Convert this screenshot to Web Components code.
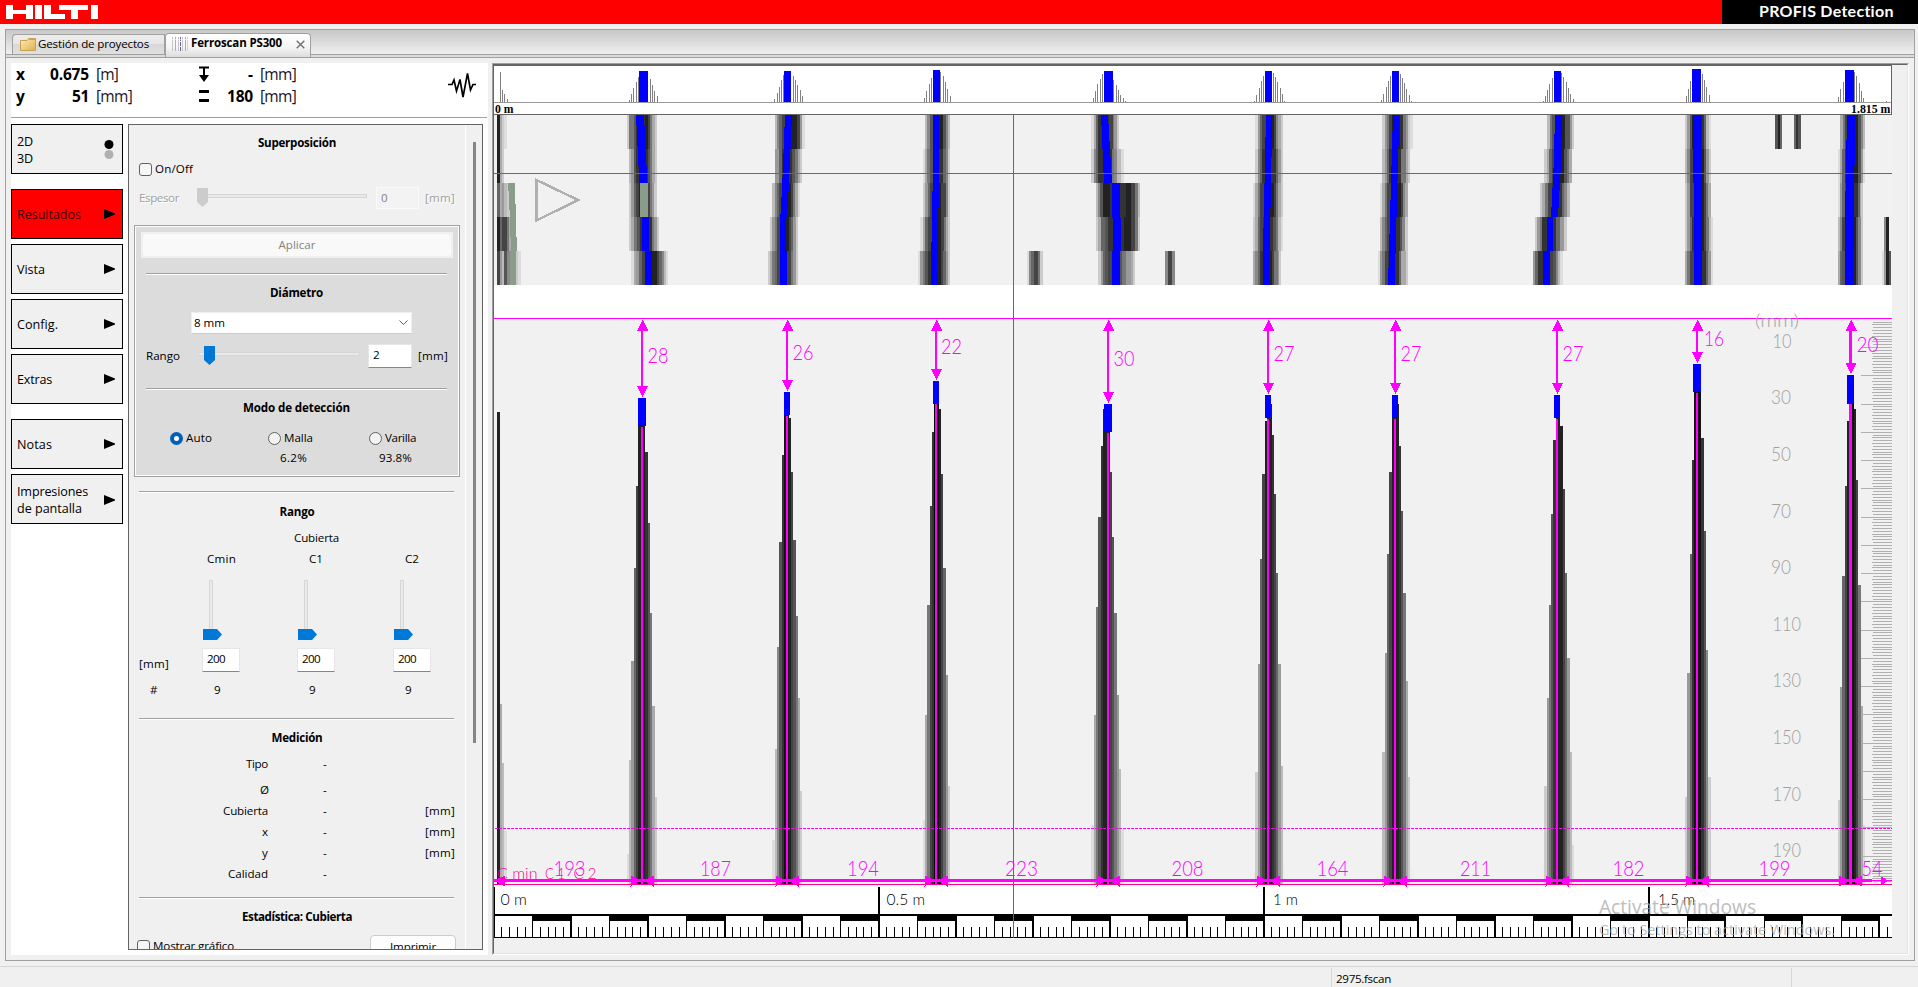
<!DOCTYPE html>
<html lang="es">
<head>
<meta charset="utf-8">
<title>PROFIS Detection</title>
<style>
html,body{margin:0;height:100%;background:#f0f0f0;overflow:hidden}
body{font:11.6px/16px "Open Sans","Noto Sans",sans-serif;color:#000}
</style>
</head>
<body>
<profis-app></profis-app>
<script>
const define=(name,html,setup)=>customElements.define(name,class extends HTMLElement{
  constructor(){super();this.attachShadow({mode:'open'});}
  connectedCallback(){
    if(this.ready)return;this.ready=true;
    this.shadowRoot.innerHTML=typeof html==='function'?html(this):html;
    if(setup)setup(this);
  }
});

/* Label whose letter spacing is tuned so the text spans exactly w pixels */
define('fit-text','<style>:host{display:block;white-space:nowrap;flex:none}:host([b]){font-weight:700}span{display:inline-block}</style><span><slot></slot></span>',el=>{
  const w=+el.getAttribute('w'),s=el.shadowRoot.querySelector('span');
  if(el.hasAttribute('s'))el.style.fontSize=el.getAttribute('s')+'px';
  if(el.hasAttribute('m'))el.style.marginLeft=el.getAttribute('m')+'px';
  const n=el.textContent.length;
  s.style.letterSpacing=((w-s.getBoundingClientRect().width)/Math.max(1,n))+'px';
  el.style.width=w+'px';
});

define('hilti-logo',`<style>:host{display:block;width:93px;height:14px}svg{display:block}</style>
<svg width="93" height="14" fill="#fff" role="img" aria-label="HILTI" shape-rendering="crispEdges">
<rect x="0" y="0" width="7" height="14"/><rect x="7" y="5" width="13" height="4"/><rect x="20" y="0" width="7" height="14"/>
<rect x="29" y="0" width="7" height="14"/><rect x="38" y="0" width="7" height="14"/><rect x="45" y="9" width="14" height="5"/>
<rect x="53" y="0" width="29" height="5"/><rect x="65" y="5" width="7" height="9"/><rect x="85" y="0" width="7" height="14"/></svg>`);

define('app-banner',`<style>:host{display:flex;height:24px;background:#f00;justify-content:space-between}
hilti-logo{margin:5px 0 0 6px}.p{box-sizing:border-box;width:196px;background:#000;color:#fff;padding:0 0 0 37px;font:700 16px/21px Lato,sans-serif}</style>
<hilti-logo></hilti-logo><div class="p"><fit-text w="135">PROFIS Detection</fit-text></div>`);

define('tab-strip',`<style>:host{display:flex;box-sizing:border-box;height:28px;padding:4px 0 0 6px;align-items:flex-start;
background:linear-gradient(#c8c8c8,#efefef 24px,#a0a0a0 24px,#a0a0a0 25px,#dcdcdc 25px,#dcdcdc 27px,#a0a0a0 27px)}
.t{display:flex;box-sizing:border-box;border:1px solid #a0a0a0;border-bottom:0;align-items:center}
.a{width:153px;height:20px;border-radius:4px 0 0 0;background:linear-gradient(#ececec,#e6e6e6 50%,#d8d8d8 50%,#e0e0e0);padding-left:7px}
.b{width:146px;height:24px;margin-top:-1px;margin-left:0;border-radius:4px 4px 0 0;background:linear-gradient(#fff,#f4f4f4 60%,#dcdcdc);padding:0 0 3px 5px}
.a fit-text,.b fit-text{position:relative;top:-1px}
svg{display:block;flex:none}</style>
<div class="t a"><svg width="16" height="13"><defs><linearGradient id="g" x2="1" y2="1"><stop offset="0" stop-color="#fdeeb5"/><stop offset="1" stop-color="#dfae52"/></linearGradient></defs><path d="M.5 2.5H7L8.500 .5H15.500V12.500H.5Z" fill="url(#g)" stroke="#c9a050"/><path d="M9 1.500H15" stroke="#74b6e8"/></svg><fit-text w="111" m="2">Gestión de proyectos</fit-text></div>
<div class="t b"><svg width="17" height="16"><g fill="none"><path d="M1.500 1V15M7.500 1V15M11.500 1V15" stroke="#c9c3d0"/><path d="M4.500 1V15M14.500 1V15" stroke="#b3a9be"/><path d="M9.500 1V15" stroke="#6f6480" stroke-dasharray="4 1"/><path d="M16.500 1V15" stroke="#d8d0e8"/><path d="M0 3.500H17" stroke="#fff" opacity=".6"/></g></svg><fit-text b w="91" m="3" s="11.500">Ferroscan PS300</fit-text><svg width="9" height="9" style="margin-left:14px"><path d="M.7 .7 8.300 8.300M8.300 .7.7 8.300" stroke="#707070" stroke-width="1.400"/></svg></div>`);

define('cursor-readout',`<style>:host{display:flex;box-sizing:border-box;height:55px;width:476px;border-bottom:1px solid #a0a0a0;font-size:15.500px;line-height:22px;background:#fff}
.g{display:grid;grid-template-columns:73px 7px 103px 29px 25px 7px 44px;grid-template-rows:22px 22px;padding-left:5px;align-items:center}
.r{justify-self:end}i{font-style:normal;color:#14142c}svg{display:block;flex:none}.h{display:grid;grid-template-columns:auto auto;justify-content:space-between}</style>
<div class="g">
<div class="h"><fit-text b w="9">x</fit-text><fit-text b w="39">0.675</fit-text></div><s></s><i><fit-text w="22">[m]</fit-text></i><svg width="10" height="17"><path d="M0 1.500H10M5 2V10" stroke="#000" stroke-width="2"/><path d="M0 9H10L5 16Z"/></svg><fit-text b class="r" w="5">-</fit-text><s></s><i><fit-text w="36">[mm]</fit-text></i>
<div class="h"><fit-text b w="9">y</fit-text><fit-text b w="17">51</fit-text></div><s></s><i><fit-text w="36">[mm]</fit-text></i><svg width="10" height="13"><path d="M0 1.500H10M0 10.500H10" stroke="#000" stroke-width="3"/></svg><fit-text b class="r" w="26">180</fit-text><s></s><i><fit-text w="36">[mm]</fit-text></i></div>
<svg width="30" height="32" viewBox="447 69 30 32" style="margin:6px 0 0 143px"><path d="M448 84.500H452L454 80 456.500 91 460 79.500 463 97 467.500 73.500 470.500 90 473 84.500H476" fill="none" stroke="#000" stroke-width="1.700"/></svg>`);

define('nav-button',el=>`<style>:host{display:flex;box-sizing:border-box;width:112px;height:50px;border:1px solid #000;background:#f0f0f0;align-items:center;justify-content:space-between;padding:0 7px 0 5px;margin-bottom:5px;font-size:12.600px;line-height:17px}
:host([on]){background:#f00;color:#400000}:host([gap]){margin-bottom:15px}:host([two]){padding-top:1px}:host([dots]){padding-right:8px}svg{display:block}</style><div><slot></slot></div>
${el.hasAttribute('dots')?'<svg width="10" height="20"><circle cx="5" cy="4.500" r="4.500"/><circle cx="5" cy="14.500" r="4.500" fill="#b0b0b0"/></svg>':'<svg width="11" height="10"><path d="M0 0 11 4.500V5.500L0 10Z"/></svg>'}`);

define('nav-menu',`<style>:host{display:flex;flex-direction:column;width:112px}</style>
<nav-button dots gap two><fit-text w="16">2D</fit-text><fit-text w="16">3D</fit-text></nav-button>
<nav-button on><fit-text w="64">Resultados</fit-text></nav-button>
<nav-button><fit-text w="28">Vista</fit-text></nav-button>
<nav-button><fit-text w="41">Config.</fit-text></nav-button>
<nav-button gap><fit-text w="35">Extras</fit-text></nav-button>
<nav-button><fit-text w="35">Notas</fit-text></nav-button>
<nav-button two><fit-text w="71">Impresiones</fit-text><fit-text w="65">de pantalla</fit-text></nav-button>`);

define('ui-row',el=>`<style>:host{display:flex;align-items:center;flex:none;box-sizing:border-box;height:${el.getAttribute('h')}px;padding-left:${el.getAttribute('l')||0}px}:host([c]){justify-content:center}:host([top]){align-items:flex-start}</style><slot></slot>`);
define('ui-rule','<style>:host{display:block;flex:none;height:1px;background:#a0a0a0;border-bottom:1px solid #fff;margin:0 11px 0 10px}</style>');
define('ui-check','<style>:host{display:block;flex:none;box-sizing:border-box;width:13px;height:13px;border:1px solid #626262;border-radius:3px;background:#f6f6f6}</style>');
define('ui-radio','<style>:host{display:block;flex:none;box-sizing:border-box;width:13px;height:13px;border:1px solid #626262;border-radius:50%;background:#f3f3f3}:host([on]){border:4px solid #005fb8;background:#fff}</style>');
define('ui-field',el=>`<style>:host{display:block;flex:none;box-sizing:border-box;width:${el.getAttribute('w')}px;height:${el.getAttribute('h')}px;background:#fff;border:1px solid #e6e6e6;border-bottom-color:#868686;padding:2px 0 0 4px}:host([off]){background:#f3f3f3;border-color:#fafafa;color:#838383}</style><slot></slot>`);
define('h-slider',el=>`<style>:host{display:block;flex:none}svg{display:block}</style><svg width="${el.getAttribute('w')}" height="20"><rect x=".5" y="6.500" width="${el.getAttribute('w')-1}" height="3" fill="#e7eaea" stroke="#d6d6d6"/><path d="M${el.getAttribute('p')} 0h11v14l-5.500 5-5.500-5z" fill="${el.hasAttribute('off')?'#ccc':'#0078d7'}"/></svg>`);
define('v-slider',`<style>:host{display:block;flex:none}svg{display:block}</style><svg width="20" height="60"><rect x="6.500" y=".5" width="3" height="52" fill="#e7eaea" stroke="#d6d6d6"/><path d="M0 49h14l5 5.500-5 5.500H0z" fill="#0078d7"/></svg>`);
define('measure-row',el=>{const u=el.hasAttribute('unit');return `<style>:host{display:grid;flex:none;grid-template-columns:139px 55px 102px 1fr;height:21px;align-items:center}fit-text{justify-self:start}.k{justify-self:end}</style><fit-text class="k" w="${el.getAttribute('w')}">${el.getAttribute('k')}</fit-text><s></s><fit-text w="4">-</fit-text>${u?'<fit-text w="30">[mm]</fit-text>':''}`});

define('settings-panel',`<style>:host{display:flex;box-sizing:border-box;width:355px;height:826px;border:1px solid #646464;background:#f0f0f0;overflow:hidden}
.c{width:336px;display:flex;flex-direction:column;flex:none;border-right:1px solid #fff}.sb{width:3px;height:601px;background:#858585;margin:17px 0 0 7px}
.box{flex:none;box-sizing:border-box;width:326px;height:252px;margin-left:5px;border:1px solid #a0a0a0;box-shadow:inset 0 0 0 1px #fff;background:#dcdcdc;display:flex;flex-direction:column;padding:6px 0 0 6px}
.box ui-rule{margin:0 12px 0 5px}
.ap{width:312px;height:26px;flex:none;box-sizing:border-box;background:#f0f0f0;padding:2px}.ap div{height:22px;border-radius:4px;background:#f9f9f9;display:flex;align-items:center;justify-content:center;color:#838383}
.cb{width:221px;height:22px;flex:none;box-sizing:border-box;background:#fff;border:1px solid #eee;border-bottom-color:#ccc;display:flex;align-items:center;justify-content:space-between;padding:0 3px 0 2px}
.off{color:#a0a0a0;text-shadow:1px 1px #fff}.bt{box-sizing:border-box;width:86px;height:27px;border:1px solid #ccc;border-radius:4px;background:#fdfdfd;display:flex;justify-content:center;padding-top:3px}</style>
<div class="c">
<ui-row h="36" c><fit-text b w="78">Superposición</fit-text></ui-row>
<ui-row h="16" l="10"><ui-check style="position:relative;top:0"></ui-check><fit-text w="38" m="3" style="margin-top:-1px">On/Off</fit-text></ui-row>
<ui-row h="10"></ui-row>
<ui-row h="22" l="10" class="off"><fit-text w="40">Espesor</fit-text><h-slider off w="170" p="0" style="margin-left:18px"></h-slider><ui-field off w="43" h="22" style="margin-left:9px;text-shadow:none"><fit-text w="7">0</fit-text></ui-field><fit-text w="30" m="6">[mm]</fit-text></ui-row>
<ui-row h="16"></ui-row>
<div class="box">
<div class="ap"><div><fit-text w="37">Aplicar</fit-text></div></div>
<ui-row h="15"></ui-row><ui-rule></ui-rule>
<ui-row h="36" l="129"><fit-text b w="53">Diámetro</fit-text></ui-row>
<ui-row h="24" l="50"><div class="cb"><fit-text w="31">8 mm</fit-text><svg width="9" height="6"><path d="M.5.5 4.500 4.500 8.500.5" fill="none" stroke="#606060"/></svg></div></ui-row>
<ui-row h="42" l="5"><fit-text w="34">Rango</fit-text><h-slider w="162" p="6" style="margin-left:18px"></h-slider><ui-field w="44" h="24" style="margin-left:8px"><fit-text w="7">2</fit-text></ui-field><fit-text w="30" m="6">[mm]</fit-text></ui-row>
<ui-row h="11"></ui-row><ui-rule></ui-rule>
<ui-row h="36" l="102"><fit-text b w="107">Modo de detección</fit-text></ui-row>
<ui-row h="24" l="29"><ui-radio on></ui-radio><fit-text w="26" m="3">Auto</fit-text><ui-radio style="margin-left:56px"></ui-radio><fit-text w="29" m="3">Malla</fit-text><ui-radio style="margin-left:56px"></ui-radio><fit-text w="31" m="3">Varilla</fit-text></ui-row>
<ui-row h="16" l="139"><fit-text w="27">6.2%</fit-text><fit-text w="33" m="72">93.8%</fit-text></ui-row>
</div>
<ui-row h="14"></ui-row><ui-rule></ui-rule>
<ui-row h="38" c><fit-text b w="35">Rango</fit-text></ui-row>
<ui-row h="14" l="165"><fit-text w="45">Cubierta</fit-text></ui-row>
<ui-row h="28" l="78"><fit-text w="29">Cmin</fit-text><fit-text w="14" m="73">C1</fit-text><fit-text w="14" m="82">C2</fit-text></ui-row>
<ui-row h="7"></ui-row>
<ui-row h="60" l="74"><v-slider></v-slider><v-slider style="margin-left:75px"></v-slider><v-slider style="margin-left:76px"></v-slider></ui-row>
<ui-row h="8"></ui-row>
<ui-row h="24" l="10" top><fit-text w="30" style="margin-top:8px">[mm]</fit-text><ui-field w="38" h="24" style="margin-left:33px"><fit-text w="18">200</fit-text></ui-field><ui-field w="38" h="24" style="margin-left:57px"><fit-text w="18">200</fit-text></ui-field><ui-field w="38" h="24" style="margin-left:58px"><fit-text w="18">200</fit-text></ui-field></ui-row>
<ui-row h="35" l="21"><fit-text w="7">#</fit-text><fit-text w="6" m="57">9</fit-text><fit-text w="6" m="89">9</fit-text><fit-text w="6" m="90">9</fit-text></ui-row>
<ui-row h="11"></ui-row><ui-rule></ui-rule>
<ui-row h="36" c><fit-text b w="51">Medición</fit-text></ui-row>
<measure-row k="Tipo" w="22" style="height:16px"></measure-row><ui-row h="7"></ui-row>
<measure-row k="Ø" w="8"></measure-row><measure-row k="Cubierta" w="45" unit></measure-row><measure-row k="x" w="6" unit></measure-row><measure-row k="y" w="6" unit></measure-row><measure-row k="Calidad" w="40"></measure-row>
<ui-row h="13"></ui-row><ui-rule></ui-rule>
<ui-row h="36" c><fit-text b w="110">Estadística: Cubierta</fit-text></ui-row>
<ui-row h="26" l="8" top><ui-check style="margin-top:5px"></ui-check><fit-text w="81" m="3" style="margin-top:3px">Mostrar gráfico</fit-text><div class="bt" style="margin-left:136px"><fit-text w="46">Imprimir</fit-text></div></ui-row>
</div><div class="sb"></div>`);

/* ---------- scan drawing: regions keep their own origin, lengths in thirds of a pixel ---------- */
const TOP=[[490,'30 50,36 104,42 117,51 132,418 135,424 116,430 99,439 81,445 66,481 72,487 90,493 107,502 123,853 132,862 114,868 96,874 75,880 60,910 63,916 74,922 90,931 105,937 123,1303 129,1309 108,1318 87,1324 69,1351 51,1360 63,1366 81,1372 102,1381 123','447 474 48,882 903 48,1329 1350 45'],
[960,'400 129,406 108,412 87,421 72,427 57,460 75,469 90,475 105,481 120,490 129,496 138,883 138,889 120,898 99,904 78,910 63,940 54,946 66,952 81,961 99,967 117,973 138,1264 135,1270 117,1279 96,1285 78,1291 63,1321 57,1327 69,1333 84,1339 102,1348 120,1354 138','432 459 48,915 936 48,1296 1317 48'],
[1430,'340 138,346 123,352 105,358 87,367 69,394 54,400 66,409 81,415 99,421 117,430 132,769 123,775 102,781 78,817 57,823 75,829 96,838 120,1225 126,1231 102,1240 81,1273 51,1279 63,1288 84,1294 108,1300 129,1369 138','372 393 48,786 813 42,1245 1272 45']];
/* per region: [slice row, "edge shade edge shade … edge"] */
const BANDS=[[490,[
[0,'21 2 30 a 36 c 42 d 51'],[1,'21 2 30 a 36 c 42'],[2,'21 6 30 a 36 9 42 b 50 c 60'],[3,'21 2 30 6 36 4 51 7 57 a 63'],[4,'21 4 30 9 36 b 42 5 51 8 60 c 84 d 93'],
[0,'411 c 417 7 432 5 438 3 465 2 474 4 480 7 486 a 495 c 501'],[1,'417 b 423 9 432 5 438 3 468 3 474 5 480 7 486 a 495 c 501'],[2,'417 c 423 9 432 6 438 4 447 2 474 4 480 7 486 9 492 c 501'],[3,'417 c 423 a 432 7 441 5 450 3 486 7 492 9 501 c 507'],[4,'423 d 432 a 438 9 447 6 456 4 486 2 501 4 507 6 516 8 522 b 528 d 534'],
[0,'855 b 861 8 867 6 876 4 885 2 921 4 930 9 936 d 945'],[1,'855 9 867 6 876 3 903 3 906 5 915 7 924 a 930 c 936'],[2,'846 b 855 8 861 6 867 4 876 2 903 4 909 7 915 a 924 d 930'],[3,'840 c 846 9 855 7 861 4 870 2 897 4 903 6 909 9 918 c 924'],[4,'834 c 840 a 846 7 855 6 861 4 903 7 909 9 918 c 924'],
[0,'1305 b 1311 8 1320 5 1329 2 1359 5 1368 8 1374 b 1380'],[1,'1299 d 1305 a 1311 7 1320 5 1329 3 1359 6 1368 8 1374 c 1380'],[2,'1299 c 1305 9 1314 6 1320 4 1329 2 1353 4 1368 8 1374 c 1380'],[3,'1290 d 1299 a 1305 6 1314 4 1326 2 1353 4 1362 7 1368 a 1374 c 1380'],[4,'1284 d 1290 9 1299 7 1305 5 1314 3 1323 2 1353 4 1359 6 1368 9 1374 c 1380']]],
[960,[[4,'201 d 207 8 213 6 222 4 234 7 240 c 249'],[4,'615 8 624 4 636 8 645'],
[0,'393 d 402 a 408 6 414 3 447 4 459 7 462 9 471 c 477'],[1,'393 c 402 8 408 6 414 3 456 7 462 8 471 b 483 d 492'],[2,'408 b 414 8 420 5 429 2 450 3 498 2 513 4 525 7 534 b 540'],[3,'408 c 414 a 423 6 435 5 444 3 492 2 513 4 525 7 534 c 540'],[4,'414 c 423 9 429 6 435 5 444 4 480 5 486 7 498 9 513 a 519 c 525'],
[0,'885 d 894 9 900 6 906 4 918 2 942 4 948 8 954 a 963 c 969'],[1,'885 c 894 8 900 6 906 3 948 6 954 9 963 c 969'],[2,'879 d 885 a 894 7 900 4 912 2 942 4 948 7 954 a 963 c 969'],[3,'879 c 885 a 894 6 900 4 910 3 939 5 948 7 954 b 963 d 969'],[4,'879 a 885 8 894 6 900 3 909 2 936 4 942 7 954 9 957 c 963'],
[0,'1266 c 1275 9 1281 7 1287 4 1296 2 1320 3 1329 7 1338 9 1344 c 1350 d 1359'],[1,'1266 b 1275 9 1281 6 1287 3 1323 7 1338 a 1344 c 1350'],[2,'1260 d 1266 a 1275 7 1281 4 1293 2 1323 4 1329 8 1335 a 1344'],[3,'1260 b 1266 8 1275 6 1281 4 1290 3 1320 5 1326 8 1335 c 1344'],[4,'1254 d 1260 9 1266 7 1275 4 1284 3 1317 6 1323 a 1338 c 1344']]],
[1430,[[0,'351 b 360 7 366 5 375 2 405 5 420 9 426 c 432'],[1,'342 c 351 a 357 6 366 4 372 2 402 5 411 7 417 a 426'],[2,'330 c 336 a 345 7 354 4 366 3 396 6 402 8 411 b 420'],[3,'315 c 321 9 330 7 336 3 378 6 390 9 402 c 411'],[4,'309 9 315 6 324 3 360 4 369 5 378 8 384 b 390 d 399'],
[0,'765 c 771 9 780 5 786 2 816 3 822 6 828 b 837 d 843'],[1,'765 b 771 8 780 4 789 2 822 5 828 9 837 c 843'],[2,'765 c 771 9 780 4 792 2 822 4 828 7 834 a 843'],[3,'765 c 771 9 780 6 786 3 792 2 822 4 828 7 837 b 843 d 849'],[4,'765 a 771 7 780 4 792 3 828 6 834 9 843 d 849'],
[0,'1035 5 1043 2 1050 6 1056'],[0,'1092 6 1098 3 1104 5 1113'],
[0,'1230 a 1239 7 1245 4 1251 2 1284 5 1293 8 1299 b 1305'],[1,'1224 d 1230 a 1236 6 1245 3 1251 2 1284 5 1293 9 1299 d 1305'],[2,'1224 d 1230 9 1236 6 1245 4 1272 3 1284 6 1290 a 1293 c 1299'],[3,'1224 b 1230 8 1236 4 1245 2 1278 5 1284 8 1293 c 1299'],[4,'1224 a 1230 6 1236 5 1245 2 1278 5 1284 8 1293 c 1299'],
[3,'1362 8 1368 2 1377'],[4,'1356 d 1362 9 1368 2 1377 5 1383']]]];
/* bar axes in the plan view: left right y … */
const AXES=[[490,['438 462 180,448 472 384','456 478 486,456 478 588','465 486 588,465 486 690','885 906 180,877 897 384,871 891 486','870 888 486,870 888 588','870 891 588,870 891 690','1329 1348 180,1328 1347 384,1326 1345 486,1324 1343 588,1323 1341 690']],
[960,['423 444 180,432 456 384','456 480 384,459 483 588','456 480 588,456 480 690','918 937 180,909 929 588','909 927 588,909 927 690','1299 1318 180,1284 1304 690']],
[1430,['375 396 180,371 393 330,363 384 486','351 369 486,351 369 588','339 360 588,339 360 690','789 813 180,789 813 366','792 816 366,792 816 690','1251 1276 180,1245 1271 486,1245 1270 690']]];
const GREEN=['54 75 384,57 76 430,60 78 500,63 81 588','60 78 588,60 78 690','450 474 384,450 474 486'];
/* depth profile columns: left right top shade */
const COLS=[[490,'21 30 171 2,30 36 1047 a,36 42 1224 b,42 51 1428 d,411 417 1497 d,417 423 1215 b,423 432 918 9,432 438 639 6,438 444 393 4,444 465 213 2,465 474 291 3,474 480 504 5,480 486 774 7,486 495 1053 a,495 501 1326 c,846 855 1455 d,855 861 1182 b,861 867 876 8,867 876 561 5,876 882 300 3,882 897 180 1,897 903 189 2,903 909 351 4,909 918 555 5,918 924 783 7,924 930 1029 a,930 936 1308 c,1299 1305 1395 d,1305 1311 1080 a,1311 1320 750 7,1320 1326 453 4,1326 1332 231 3,1332 1347 147 0,1347 1353 162 2,1353 1359 357 4,1359 1368 639 6,1368 1374 960 9,1374 1380 1293 c'],
[960,'393 402 1410 d,402 408 1080 a,408 414 756 7,414 423 486 5,423 429 273 3,429 450 162 2,450 456 351 4,456 462 546 5,462 471 774 7,471 477 1020 9,477 483 1242 b,483 492 1422 d,879 885 1548 e,885 894 1251 c,894 900 927 9,900 906 612 6,906 915 357 4,915 921 198 2,921 936 147 2,936 942 240 3,942 948 417 4,948 954 654 6,954 963 927 9,963 969 1233 b,969 975 1521 e,1260 1266 1479 e,1266 1275 1191 b,1275 1281 894 9,1281 1287 597 6,1287 1296 351 4,1296 1317 147 2,1317 1323 273 3,1323 1329 468 5,1329 1338 714 7,1338 1344 978 a,1344 1350 1266 c,1350 1359 1540 e'],
[1430,'336 342 1530 e,342 351 1293 c,351 357 1029 9,357 363 750 7,363 369 477 5,369 378 255 3,378 390 188 2,390 399 213 2,399 405 402 4,405 411 654 6,411 420 909 9,420 426 1191 b,426 432 1470 d,765 771 1326 c,771 780 954 9,780 786 597 6,786 792 315 3,792 813 111 1,813 822 249 3,822 828 528 5,828 834 885 8,834 843 1266 c,1224 1230 1335 c,1230 1236 996 9,1236 1245 663 6,1245 1251 393 4,1251 1257 198 2,1257 1272 147 1,1272 1278 162 2,1278 1284 375 4,1284 1293 690 7,1293 1299 1053 a,1299 1305 1410 d']];
/* rebars: axis, shaft width, cap left, cap right, cap top, cap bottom, cover, label x, label baseline, label width */
const BARS=[[642,2,638,646,398,426,28,647.500,362.500,21],[787,2,784,790,392,415,26,792.500,360,21],[936,2,933,939,381,404,22,941,354,21],[1108,2,1104,1112,404,432,30,1113.500,366,21],[1268,2,1265,1271,395,418,27,1273.500,361,21],[1395,2,1392,1398,395,418,27,1400.500,361,21],[1557,2,1554,1560,395,418,27,1562.500,361,21],[1697,2,1693,1701,364,392,16,1704,345.500,20],[1850.500,3,1847,1854,375,404,20,1856.500,352,22]];
const DIST=[['193',553.500,32],['187',700,31],['194',847,32],['223',1005,33],['208',1171.500,32],['164',1316.500,32],['211',1460,31],['182',1612.500,32],['199',1758.500,32],['54',1861.500,21]];

define('scan-plot','<style>:host{display:block}svg{display:block}text{font-family:Lato,sans-serif;font-weight:300}</style>',el=>{
  const o=[],R=Math.round,M='#f0f';
  const rect=(x1,y1,x2,y2,f)=>o.push(`<rect x="${x1}" y="${y1}" width="${x2-x1}" height="${y2-y1}" fill="${f}"/>`);
  const text=(s,x,y,w,size,f,extra='')=>o.push(`<text x="${x}" y="${y}" font-size="${size}" fill="${f}" textLength="${w}" lengthAdjust="spacingAndGlyphs" ${extra}>${s}</text>`);
  const poly=(ox,d,f)=>{const p=d.split(',').map(v=>v.split(' ').map(Number));
    o.push(`<polygon fill="${f}" points="${p.map(v=>(ox+v[0]/3)+','+(55+v[2]/3)).concat(p.reverse().map(v=>(ox+v[1]/3)+','+(55+v[2]/3))).join(' ')}"/>`)};
  const X0=494,X1=1892;
  rect(X0,65,X1,115,'#fff');rect(X0,65,X1,66,'#646464');rect(X0,102,X1,103,'#999');rect(X0,114,X1,115,'#646464');rect(1891,65,1892,115,'#646464');
  for(const [ox,l,b] of TOP){
    l.split(',').forEach(v=>{const [x,y]=v.split(' ').map(Number);const px=Math.floor(ox+x/3);rect(px,R(55+y/3),px+1,102,'#808080')});
    b.split(',').forEach(v=>{const [x,x2,y]=v.split(' ').map(Number);rect(R(ox+x/3),R(55+y/3),R(ox+x2/3),102,'#00f')});
  }
  const serif='style="font-family:\'Liberation Serif\',serif;font-weight:700"';
  text('0 m',495,112.500,18.500,12.500,'#000',serif);text('1.815 m',1851,113,39.500,13,'#000',serif);
  rect(X0,115,X1,285,'#f1f1f1');rect(X0,285,X1,318,'#fff');rect(X0,318,X1,885,'#f1f1f1');rect(X0,885,X1,938,'#fff');
  for(const [ox,rows] of BANDS)for(const [r,d] of rows){const t=d.split(' ');
    for(let i=0;i+2<t.length;i+=2)rect(R(ox+t[i]/3),115+34*r,R(ox+t[i+2]/3),149+34*r,'#'+t[i+1].repeat(3));}
  for(const [ox,a] of AXES)a.forEach(d=>poly(ox,d,'#00f'));
  GREEN.forEach(d=>poly(490,d,'#8a9c8a'));
  for(const [ox,d] of COLS)d.split(',').forEach(v=>{const [a,b,t,c]=v.split(' ');rect(R(ox+a/3),R(355+t/3),R(ox+b/3),884,'#'+c.repeat(3))});
  o.push('<path d="M536.500 180V220.500L578 200Z" fill="none" stroke="#b0b0b0" stroke-width="2.500"/>');
  rect(X0,173,X1,174,M);rect(X0,318,X1,319,M);
  /* depth scale */
  for(let mm=1;mm<200;mm++){const y=R(318.800+mm*2.826);rect(mm%10?(mm%2?1873:1872):1861,y,X1,y+1,'#b0b0b0');}
  text('(mm)',1755,327,44,18,'#a4a4a4');
  [348,403.500,460.500,517.500,573.500,630.500,686.500,743.500,800.500,857].forEach((y,i)=>text(10+20*i,i>4?1772.500:i?1771:1772.500,y,i>4?28.500:i?20:19,19.500,'#a0a0a0'));
  /* cover arrows */
  for(const [x,w,cl,cr,ct,cb,n,lx,ly,lw] of BARS){
    rect(x-w/2,cb+(cb===404?0:1),x+w/2,884,M);rect(x-w/2,325,x+w/2,ct-8,M);
    o.push(`<path fill="${M}" d="M${x+.5} 319.500l5.500 11h-11zM${x+.5} ${ct-1}l5.500-11h-11z"/>`);
    rect(cl,ct,cr,cb,'#00f');text(n,lx,ly,lw,20.800,M);
  }
  o.push(`<path d="M495 828.500H${X1}" stroke="${M}" stroke-dasharray="3 1"/>`);
  /* spacing dimension chain */
  rect(X0,879,1872,882,M);rect(1872,880,X1,881,M);
  BARS.forEach(([x])=>o.push(`<path fill="${M}" d="M${x-1.500} 880.500l-10-5v11zM${x+1.500} 880.500l10-5v11z"/>`));
  o.push(`<path fill="${M}" d="M494 880.500l11-5v11zM1888 880.500l-7-4v9z"/>`);
  rect(X0,884,X1,885,'#ff0090');
  text('C min',497,879,40.500,15,'#ff0090');text('C 1',545,879,20,15,'#ff0090');text('C 2',573.500,879,23,15,'#ff0090');
  DIST.forEach(([s,x,w])=>text(s,x,875.500,w,20.800,M));
  /* metre ruler */
  const B='#000',P=7.698;
  for(let i=0;i<=181;i++){const x=R(494+i*P-.2);
    if(i%5===0){const seg=i/5,nx=Math.min(X1,R(494+(i+5)*P));if(seg%2)rect(x,916,nx,921,B);rect(seg%2?x:Math.max(494,x-1),914,x+1,937,B);}
    else rect(x,927,x+1,937,B);}
  rect(X0,914,X1,916,B);rect(X0,937,X1,938,B);rect(494,887,495,937,B);
  [879,1264,1649].forEach(x=>rect(x-1,887,x+1,914,B));
  text('0 m',500.500,904.500,26.500,15,B);text('0.5 m',886.500,904.500,38.500,15,B);text('1 m',1273,904.500,25,15,B);text('1.5 m',1658,904.500,37,15,B);
  rect(1013,115,1014,938,M);
  const wm='style="font-family:\'Open Sans\',sans-serif;font-weight:400" opacity=".75"';
  text('Activate Windows',1599,914,157,20,'#a8a8a8',wm);text('Go to Settings to activate Windows.',1599,935,236,14.500,'#a8a8a8',wm);
  el.shadowRoot.innerHTML+=`<svg width="1398" height="873" viewBox="494 65 1398 873" shape-rendering="crispEdges">${o.join('')}</svg>`;
});

define('profis-app',`<style>:host{display:flex;flex-direction:column;width:1918px;height:987px;background:#f0f0f0}
.w{box-sizing:border-box;width:1910px;height:932px;margin:5px 0 0 5px;border:1px solid #a0a0a0;display:flex;flex-direction:column;flex:none}
.m{display:flex;padding:5px 0 0 5px}.l{width:477px;height:892px;background:#fff;flex:none}
.n{display:flex;padding-top:6px}settings-panel{margin-left:5px}
.r{box-sizing:border-box;width:1417px;height:892px;margin-left:4px;border:1px solid;border-color:#a0a0a0 #fff #fff #a0a0a0;flex:none}
.i{box-sizing:border-box;width:1415px;height:890px;border:1px solid;border-color:#646464 #e3e3e3 #e3e3e3 #646464}
.s{display:flex;box-sizing:border-box;height:21px;margin-top:5px;border-top:1px solid #d7d7d7;flex:none;padding-top:1px}
.s div{box-sizing:border-box;border-left:1px solid #d7d7d7;height:19px}.s div:first-of-type{margin-left:1331px;width:460px;padding:3px 0 0 4px}.s div:last-child{width:100px}</style>
<app-banner></app-banner>
<div class="w"><tab-strip></tab-strip><div class="m"><div class="l"><cursor-readout></cursor-readout><div class="n"><nav-menu></nav-menu><settings-panel></settings-panel></div></div>
<div class="r"><div class="i"><scan-plot></scan-plot></div></div></div></div>
<div class="s"><div><fit-text w="55">2975.fscan</fit-text></div><div></div></div>`);
</script>
</body>
</html>
